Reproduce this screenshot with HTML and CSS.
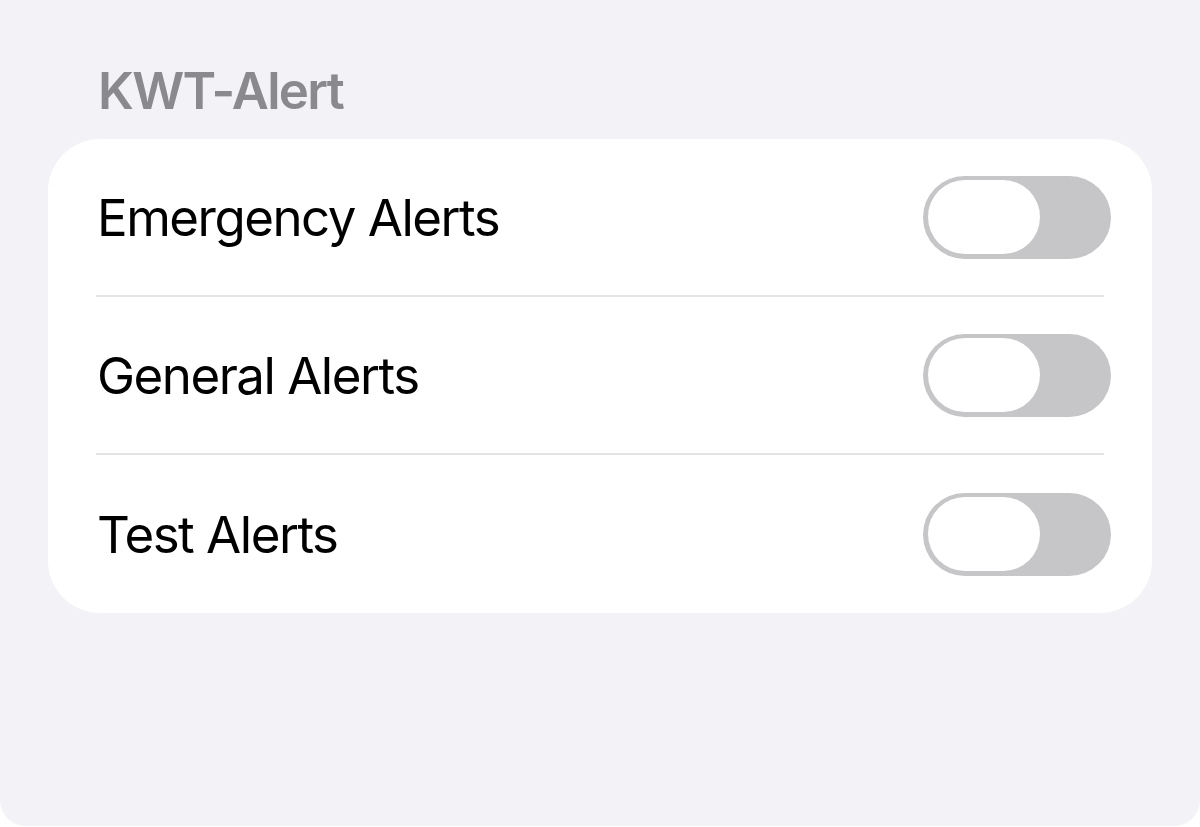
FILE: index.html
```html
<!DOCTYPE html>
<html lang="en">
<head>
    <meta charset="UTF-8">
    <meta name="viewport" content="width=device-width, initial-scale=1.0">
    <title>KWT-Alert</title>
    <link rel="stylesheet" href="styles.css">
</head>
<body>
    <div class="screen">
        <div class="group">
            <h2 class="group_title">KWT-Alert</h2>
            <div class="card">
                <div class="row">
                    <span class="row_label">Emergency Alerts</span>
                    <span class="toggle"><span class="knob"></span></span>
                </div>
                <div class="row">
                    <span class="row_label">General Alerts</span>
                    <span class="toggle"><span class="knob"></span></span>
                </div>
                <div class="row">
                    <span class="row_label">Test Alerts</span>
                    <span class="toggle"><span class="knob"></span></span>
                </div>
            </div>
        </div>
    </div>
</body>
</html>
```

FILE: styles.css
```css
html, body {
    margin: 0;
    padding: 0;
    background: #ffffff;
}
body {
    font-family: Inter, "Noto Sans", "Liberation Sans", sans-serif;
}
.screen {
    width: 1200px;
    height: 826px;
    background: #f2f2f7;
    border-radius: 0 0 26px 26px;
    overflow: hidden;
}
.group {
    padding: 61px 48px 0 48px;
}
.group_title {
    margin: 0 0 0 50px;
    height: 78px;
    font-size: 51px;
    font-weight: 600;
    line-height: 60px;
    color: #8a8a8e;
    letter-spacing: -1.7px;
}
.card {
    background: #ffffff;
    border-radius: 52px;
    padding: 0 48px;
}
.row {
    display: flex;
    align-items: center;
    justify-content: space-between;
    height: 158px;
    box-sizing: border-box;
    border-bottom: 2px solid #e4e4e6;
}
.row:last-child {
    border-bottom: none;
}
.row_label {
    font-size: 51px;
    color: #000000;
    margin-left: 1px;
    letter-spacing: -1.5px;
}
/* switch in the off state: grey pill with a wide white knob on the left */
.toggle {
    display: flex;
    align-items: center;
    width: 188px;
    height: 83px;
    margin-right: -7px;
    border-radius: 42px;
    background: #c6c6c8;
    box-sizing: border-box;
    padding: 0 5px;
}
.knob {
    width: 112px;
    height: 74px;
    border-radius: 37px;
    background: #ffffff;
}
```
